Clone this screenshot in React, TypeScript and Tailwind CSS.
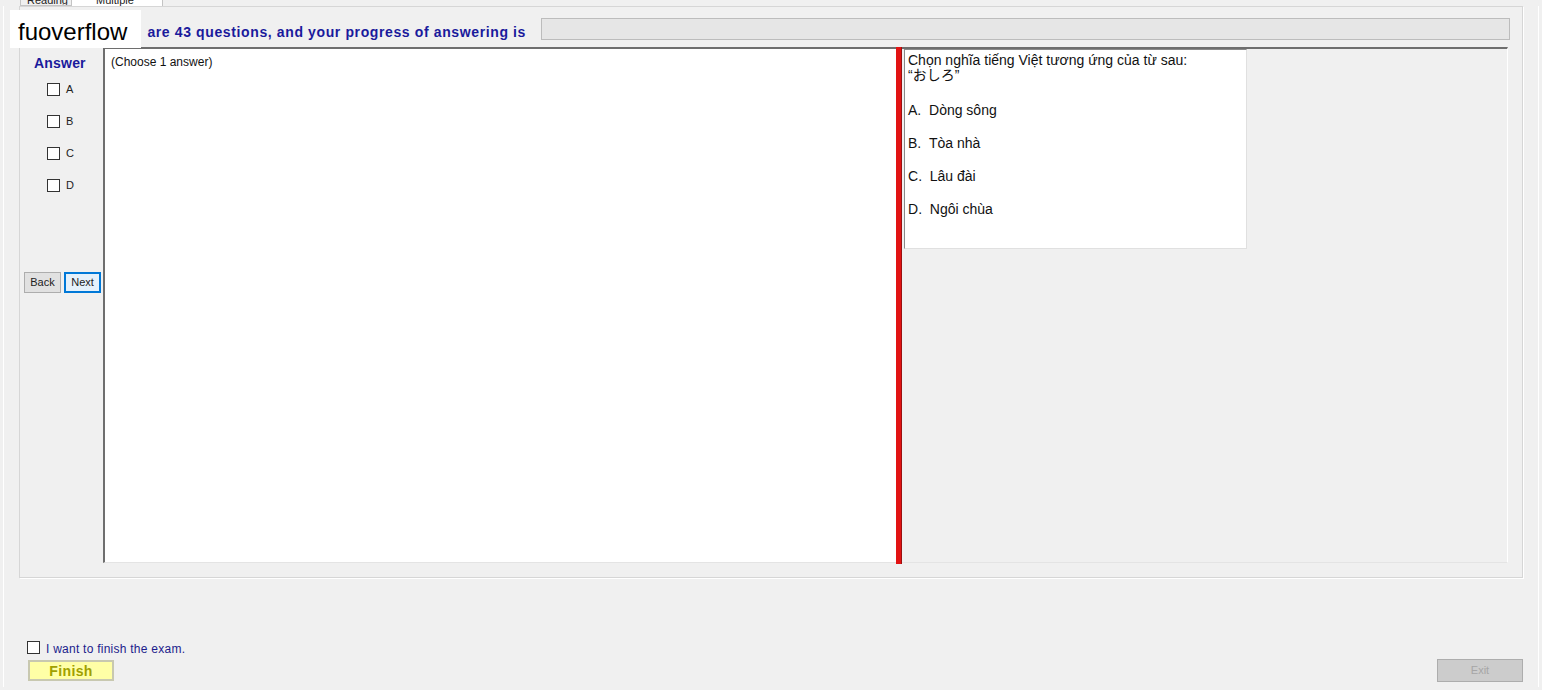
import React from 'react';

const FONT = { fontFamily: '"Liberation Sans", Arial, "Noto Sans CJK JP", sans-serif' };

function Check({ label }: { label?: string }) {
  return (
    <div className="flex items-center h-[13px]">
      <div className="w-[13px] h-[13px] border border-[#333] bg-white" />
      {label && <span className="ml-[6px] text-[11px] text-[#222] leading-none">{label}</span>}
    </div>
  );
}

export default function App() {
  const options = ['Dòng sông', 'Tòa nhà', 'Lâu đài', 'Ngôi chùa'];
  const letters = ['A', 'B', 'C', 'D'];

  return (
    <div className="relative w-[1542px] h-[690px] bg-[#f0f0f0] overflow-hidden" style={FONT}>
      {/* tab strip, mostly scrolled off */}
      <div className="flex h-[6px] pl-[20px]">
        <div className="w-[52px] h-[6px] border-x border-b border-[#c4c4c4] bg-[#f0f0f0] overflow-hidden">
          <div className="text-[11px] leading-[11px] text-[#222] -mt-[5px] pl-[6px]">Reading</div>
        </div>
        <div className="w-[91px] h-[6px] border-r border-[#c4c4c4] bg-white overflow-hidden">
          <div className="text-[11px] leading-[11px] text-[#222] -mt-[5px] pl-[24px]">Multiple</div>
        </div>
      </div>

      {/* tab page */}
      <div className="ml-[3px] w-[1536px] h-[681px] border-l border-r border-white flex flex-col">
        {/* group box */}
        <div className="ml-[15px] w-[1504px] h-[572px] border border-[#d6d6d6] shadow-[1px_1px_0_#ffffff] flex flex-col">
          <div className="flex items-start h-[40px] pl-[2px]">
            <div className="w-[504px] flex justify-end mt-[17px]">
              <span className="text-[14px] leading-[17px] font-bold tracking-[0.62px] text-[#1a1a9c] whitespace-nowrap">
                are 43 questions, and your progress of answering is
              </span>
            </div>
            <div className="ml-[15px] mt-[11px] w-[969px] h-[22px] bg-[#e6e6e6] border border-[#bcbcbc]" />
          </div>

          <div className="flex ml-[2px] w-[1486px] h-[516px]">
            {/* answer column */}
            <div className="w-[81px] flex flex-col">
              <div className="ml-[12px] mt-[8px] text-[14px] leading-[16px] font-bold tracking-[0.2px] text-[#1a1a9c]">Answer</div>
              <div className="ml-[25px] mt-[12px] flex flex-col gap-[19px]">
                {letters.map(l => (
                  <Check key={l} label={l} />
                ))}
              </div>
              <div className="flex ml-[2px] mt-[80px] gap-[3px]">
                <button className="w-[37px] h-[21px] bg-[#e1e1e1] border border-[#adadad] text-[11px] text-[#222] leading-none">
                  Back
                </button>
                <button className="w-[37px] h-[21px] bg-[#e5f1fb] border-2 border-[#0078d7] text-[11px] text-[#222] leading-none">
                  Next
                </button>
              </div>
            </div>

            {/* answer text area */}
            <div className="w-[793px] h-[516px] bg-white border-l-2 border-t-2 border-[#6e6e6e] border-b border-b-[#e4e4e4] pl-[6px] pt-[6px]">
              <div className="text-[12px] leading-[14px] text-[#111]">(Choose 1 answer)</div>
            </div>

            {/* splitter */}
            <div className="w-[6px] h-[517px] bg-[#e21313] border-r border-[#9a1010]" />

            {/* question panel */}
            <div className="w-[606px] h-[516px] border-t-2 border-[#6e6e6e] border-r border-r-white border-b border-b-[#e4e4e4]">
              <div className="ml-[2px] w-[343px] h-[200px] bg-white border-l border-t border-[#8a8a8a] border-r border-r-[#e0e0e0] border-b border-b-[#e0e0e0] pl-[3px] pt-[3px] text-[14px] text-[#111]">
                <div className="leading-[15px]">Chọn nghĩa tiếng Việt tương ứng của từ sau:</div>
                <div className="leading-[15px]">“おしろ”</div>
                <div className="mt-[19px] flex flex-col gap-[17px]">
                  {options.map((o, i) => (
                    <div key={o} className="leading-[16px]">
                      {letters[i]}.&nbsp;&nbsp;{o}
                    </div>
                  ))}
                </div>
              </div>
            </div>
          </div>
        </div>

        {/* bottom controls */}
        <div className="mt-[62px] ml-[23px] flex items-center h-[14px]">
          <div className="w-[13px] h-[13px] border border-[#333] bg-white" />
          <span className="ml-[6px] text-[12px] leading-none tracking-[0.25px] text-[#1c1c8c] mt-[3px]">I want to finish the exam.</span>
        </div>
        <div className="mt-[5px] flex justify-between items-start">
          <button className="ml-[24px] mt-[1px] w-[86px] h-[21px] bg-[#ffffa6] border-2 border-[#c8c8b0] text-[14px] font-bold tracking-[0.4px] text-[#a0a000] leading-none">
            Finish
          </button>
          <button className="mr-[15px] w-[86px] h-[23px] bg-[#cccccc] border border-[#adadad] text-[11px] text-[#a6a6a6] leading-none">
            Exit
          </button>
        </div>
      </div>

      {/* watermark */}
      <div className="absolute left-[10px] top-[10px] w-[131px] h-[38px] bg-white flex items-center pt-[5px] pl-[8px] text-[24px] text-black" style={{ fontFamily: '"Liberation Sans", Arial, sans-serif' }}>
        fuoverflow
      </div>
    </div>
  );
}
